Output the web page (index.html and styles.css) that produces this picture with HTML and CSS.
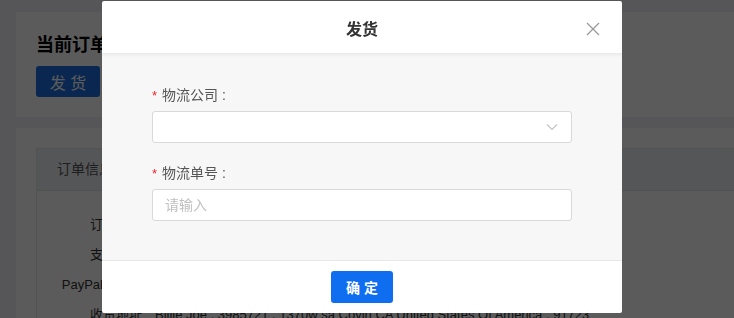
FILE: index.html
```html
<!DOCTYPE html>
<html lang="zh-CN">

<head>
    <meta charset="UTF-8">
    <meta name="viewport" content="width=device-width, initial-scale=1">
    <title>订单详情 - 发货</title>
    <link rel="stylesheet" href="styles.css">
</head>

<body>
    <div class="page">
        <div class="card">
            <h3 class="card-title">当前订单状态：待发货</h3>
            <button class="btn-ship" type="button">发 货</button>
        </div>

        <div class="card">
            <div class="info-table">
                <div class="info-head">订单信息</div>
                <div class="info-body">
                    <div class="info-row"><span class="info-label">订单编号：</span><span class="info-value">202306150012</span></div>
                    <div class="info-row"><span class="info-label">支付方式：</span><span class="info-value">PayPal</span></div>
                    <div class="info-row"><span class="info-label">PayPal交易号：</span><span class="info-value">8RT45821HJ6620714</span></div>
                    <div class="info-row"><span class="info-label">收货地址：</span><span class="info-value">Billie Joe , 3985721 , 1370w sa Covin CA United States Of America , 91723</span></div>
                </div>
            </div>
        </div>
    </div>

    <!-- 发货弹窗 -->
    <div class="modal-mask"></div>
    <div class="modal">
        <div class="modal-header">
            <span class="modal-title">发货</span>
            <button class="modal-close" type="button" aria-label="关闭">
                <svg width="14" height="14" viewBox="0 0 14 14">
                    <path d="M1 1 L13 13 M13 1 L1 13" stroke="#999" stroke-width="1.3" fill="none" />
                </svg>
            </button>
        </div>

        <div class="modal-body">
            <div class="form-item">
                <label class="form-label"><span class="required">*</span>物流公司 :</label>
                <div class="select">
                    <svg class="select-arrow" width="12" height="8" viewBox="0 0 12 8">
                        <path d="M1 1.5 L6 6.5 L11 1.5" stroke="#c4c4c4" stroke-width="1.2" fill="none" />
                    </svg>
                </div>
            </div>

            <div class="form-item">
                <label class="form-label"><span class="required">*</span>物流单号 :</label>
                <input class="text-input" type="text" placeholder="请输入">
            </div>
        </div>

        <div class="modal-footer">
            <button class="btn-primary" type="button">确 定</button>
        </div>
    </div>
</body>

</html>
```

FILE: styles.css
```css
* {
    margin: 0;
    padding: 0;
    box-sizing: border-box;
}

body {
    font-family: "Liberation Sans", "Noto Sans CJK SC", sans-serif;
    font-size: 14px;
    color: #333;
    background: #f0f2f5;
    overflow: hidden;
    height: 100vh;
}

/* 背景页面 */
.page {
    padding: 12px 0 0 16px;
    width: 900px;
}

.card {
    background: #fff;
    padding: 20px;
    margin-bottom: 11px;
}

.card-title {
    font-size: 18px;
    font-weight: 700;
    line-height: 26px;
    color: #000;
}

.btn-ship {
    margin-top: 8px;
    width: 64px;
    height: 31px;
    border: none;
    border-radius: 3px;
    background: #1a6fe0;
    color: #fff;
    font-family: inherit;
    font-size: 16px;
}

.info-table {
    border: 1px solid #e8e8e8;
}

.info-head {
    height: 42px;
    line-height: 41px;
    padding-left: 20px;
    background: #eef0f3;
    border-bottom: 1px solid #e4e4e4;
    color: #555;
}

.info-body {
    padding-top: 19px;
}

.info-row {
    display: flex;
    height: 30px;
    line-height: 30px;
    font-size: 13px;
}

.info-label {
    width: 118px;
    text-align: right;
    color: #333;
}

.info-value {
    color: #333;
}

/* 弹窗 */
.modal-mask {
    position: fixed;
    top: 0;
    left: 0;
    width: 100%;
    height: 100%;
    background: rgba(0, 0, 0, 0.645);
}

.modal {
    position: absolute;
    top: 1px;
    left: 102px;
    width: 520px;
    background: #fff;
    border-radius: 2px;
    overflow: hidden;
}

.modal-header {
    height: 53px;
    display: flex;
    align-items: center;
    justify-content: center;
    position: relative;
    box-shadow: 0 1px 3px rgba(0, 0, 0, 0.06);
    border-bottom: 1px solid #ececec;
}

.modal-title {
    font-size: 16px;
    font-weight: 700;
    color: #333;
    margin-top: 2px;
}

.modal-close {
    position: absolute;
    right: 22px;
    top: 21px;
    width: 14px;
    height: 14px;
    border: none;
    background: none;
    display: flex;
}

.modal-body {
    background: #f7f7f7;
    padding: 30px 50px 39px;
}

.form-item + .form-item {
    margin-top: 19px;
}

.form-label {
    display: block;
    height: 22px;
    line-height: 22px;
    margin-bottom: 5px;
    color: #555;
    font-size: 14px;
}

.required {
    color: #f5222d;
    margin-right: 5px;
    font-size: 13px;
}

.select {
    height: 32px;
    background: #fff;
    border: 1px solid #d9d9d9;
    border-radius: 3px;
    display: flex;
    align-items: center;
    justify-content: flex-end;
    padding-right: 13px;
}

.text-input {
    display: block;
    width: 100%;
    height: 32px;
    border: 1px solid #d9d9d9;
    border-radius: 3px;
    padding: 0 12px;
    font-family: inherit;
    font-size: 14px;
    outline: none;
    background: #fff;
}

.text-input::placeholder {
    color: #bfbfbf;
}

.modal-footer {
    height: 53px;
    border-top: 1px solid #e8e8e8;
    display: flex;
    justify-content: center;
    align-items: center;
}

.btn-primary {
    width: 62px;
    height: 32px;
    border: none;
    border-radius: 3px;
    background: #0f6ef0;
    color: #fff;
    font-family: inherit;
    font-size: 14px;
    font-weight: 700;
}
```
